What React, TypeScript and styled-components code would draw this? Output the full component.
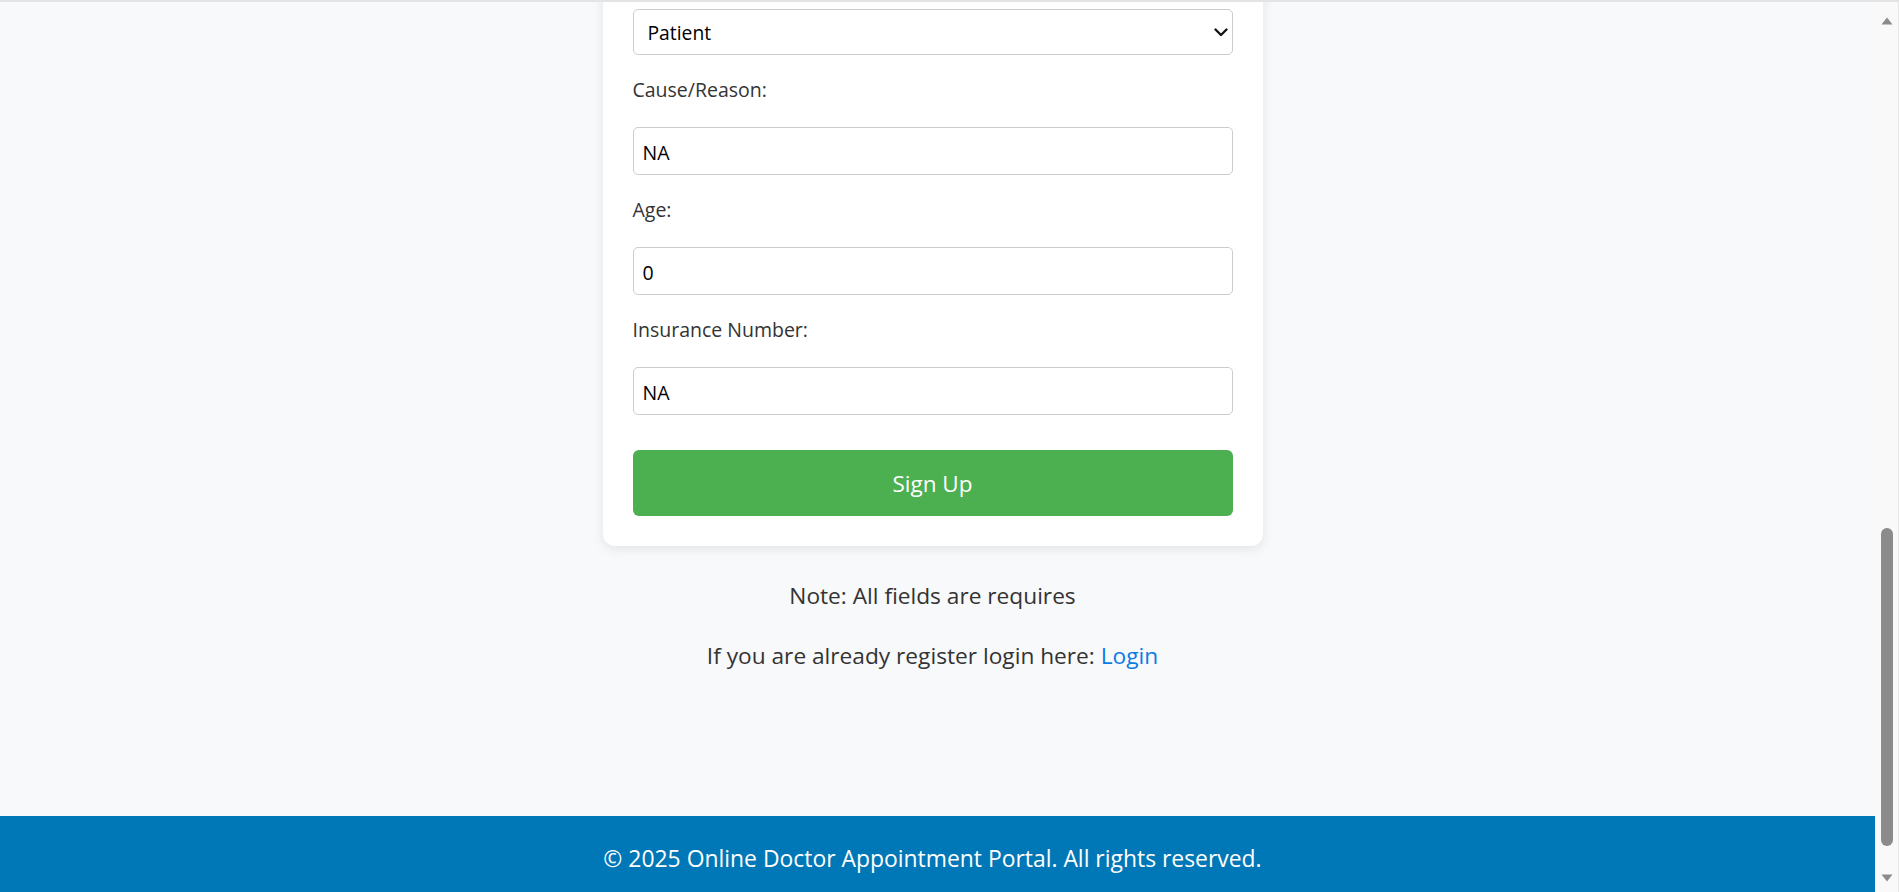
import React from "react";
import styled, { createGlobalStyle } from "styled-components";

const GlobalStyle = createGlobalStyle`
  html, body {
    margin: 0;
    padding: 0;
    height: 100%;
    overflow: hidden;
    background: #f8f9fa;
    font-family: "Open Sans", "Noto Sans", Arial, sans-serif;
  }
  #root { height: 100%; }
  * { box-sizing: border-box; }
`;

const Screen = styled.div`
  height: 100vh;
  display: flex;
  flex-direction: column;
  overflow: hidden;
`;

const TopEdge = styled.div`
  height: 2px;
  flex: none;
  background: #e3e4e6;
`;

const Body = styled.div`
  flex: 1;
  min-height: 0;
  display: flex;
`;

const Page = styled.div`
  flex: 1;
  display: flex;
  flex-direction: column;
  overflow: hidden;
`;

const Main = styled.main`
  flex: 1;
  display: flex;
  flex-direction: column;
  align-items: center;
  padding-right: 10px;
`;

const Card = styled.form`
  width: 660px;
  margin-top: -23px;
  padding: 30px;
  background: #ffffff;
  border-radius: 12px;
  box-shadow: 0 3px 12px rgba(0, 0, 0, 0.09);
  display: flex;
  flex-direction: column;
`;

const Label = styled.label`
  display: block;
  font-size: 19.5px;
  line-height: 28px;
  padding-top: 1px;
  color: #333333;
  margin-bottom: 23px;
`;

const SelectWrap = styled.div`
  position: relative;
  margin-bottom: 20px;
`;

const Select = styled.select`
  appearance: none;
  -webkit-appearance: none;
  width: 100%;
  height: 46px;
  padding: 1px 30px 0 14px;
  border: 1px solid #cccccc;
  border-radius: 5px;
  background: #ffffff;
  font-family: "Open Sans", "Noto Sans", Arial, sans-serif;
  font-size: 19.3px;
  color: #000000;
  outline: none;
`;

const Chevron = styled.svg`
  position: absolute;
  right: 5px;
  top: 19px;
  width: 14px;
  height: 9px;
  pointer-events: none;
`;

const Input = styled.input`
  width: 100%;
  height: 48px;
  padding: 2px 9px 0;
  margin-bottom: 20px;
  border: 1px solid #cccccc;
  border-radius: 5px;
  background: #ffffff;
  font-family: "Open Sans", "Noto Sans", Arial, sans-serif;
  font-size: 19.5px;
  color: #000000;
  outline: none;
`;

const SubmitButton = styled.button`
  width: 100%;
  height: 66px;
  margin-top: 15px;
  padding-top: 2px;
  border: none;
  border-radius: 6px;
  background: #4caf50;
  color: #ffffff;
  font-family: "Open Sans", "Noto Sans", Arial, sans-serif;
  font-size: 22.5px;
  cursor: pointer;
`;

const Note = styled.p<{ $gap: number }>`
  margin: ${(p) => p.$gap}px 0 0;
  font-size: 22.7px;
  line-height: 30px;
  color: #333333;
  text-align: center;
`;

const LoginLink = styled.a`
  color: #0a7be6;
  text-decoration: none;
`;

const Footer = styled.footer`
  flex: none;
  height: 76px;
  padding: 28px 10px 0 0;
  background: #0077b6;
  color: #ffffff;
  font-size: 22.9px;
  line-height: 30px;
  text-align: center;
  overflow: hidden;
`;

const ScrollTrack = styled.div`
  flex: none;
  width: 24px;
  display: flex;
  flex-direction: column;
  align-items: center;
  padding: 15px 0 10px;
  background: #f9f9f9;
  border-right: 1px solid #e6e6e6;
`;

const Arrow = styled.svg`
  width: 12px;
  height: 8px;
  flex: none;
`;

const TrackSpace = styled.div`
  flex: 1;
`;

const Thumb = styled.div`
  flex: none;
  width: 12px;
  height: 318px;
  margin-bottom: 28px;
  border-radius: 6px;
  background: #8b8b8b;
`;

export default function App() {
  return (
    <>
      <GlobalStyle />
      <Screen>
        <TopEdge />
        <Body>
          <Page>
            <Main>
              <Card onSubmit={(e) => e.preventDefault()}>
                <SelectWrap>
                  <Select defaultValue="Patient">
                    <option value="Patient">Patient</option>
                    <option value="Doctor">Doctor</option>
                  </Select>
                  <Chevron viewBox="0 0 14 9">
                    <polyline
                      points="1.5,1.5 7,7 12.5,1.5"
                      fill="none"
                      stroke="#111"
                      strokeWidth="2.3"
                      strokeLinecap="round"
                      strokeLinejoin="round"
                    />
                  </Chevron>
                </SelectWrap>
                <Label htmlFor="cause">Cause/Reason:</Label>
                <Input id="cause" type="text" defaultValue="NA" />
                <Label htmlFor="age">Age:</Label>
                <Input id="age" type="text" defaultValue="0" />
                <Label htmlFor="insurance">Insurance Number:</Label>
                <Input id="insurance" type="text" defaultValue="NA" />
                <SubmitButton type="submit">Sign Up</SubmitButton>
              </Card>
              <Note $gap={35}>Note: All fields are requires</Note>
              <Note $gap={30}>
                If you are already register login here: <LoginLink href="#">Login</LoginLink>
              </Note>
            </Main>
            <Footer>© 2025 Online Doctor Appointment Portal. All rights reserved.</Footer>
          </Page>
          <ScrollTrack>
            <Arrow viewBox="0 0 12 8">
              <polygon points="6,0.5 11.5,7.5 0.5,7.5" fill="#8b8b8b" />
            </Arrow>
            <TrackSpace />
            <Thumb />
            <Arrow viewBox="0 0 12 8">
              <polygon points="0.5,0.5 11.5,0.5 6,7.5" fill="#8b8b8b" />
            </Arrow>
          </ScrollTrack>
        </Body>
      </Screen>
    </>
  );
}
